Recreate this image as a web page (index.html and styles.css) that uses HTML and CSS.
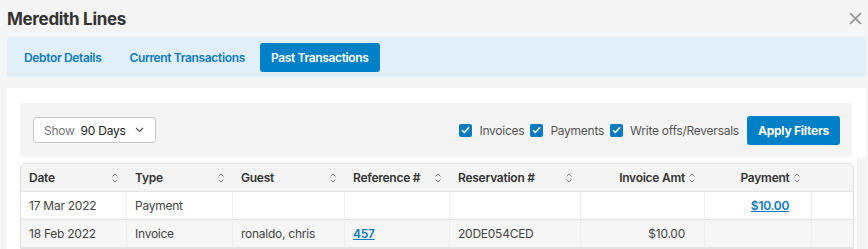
FILE: index.html
```html
<!DOCTYPE html>
<html lang="en">
<head>
    <meta charset="UTF-8">
    <title>Meredith Lines</title>
    <link rel="stylesheet" href="styles.css">
</head>
<body>
    <div class="modal">
        <!-- Header -->
        <div class="modal-header">
            <h1>Meredith Lines</h1>
            <button class="close" aria-label="Close">
                <svg width="13" height="13" viewBox="0 0 13 13"><path d="M1 1L12 12M12 1L1 12" stroke="#8a8a8a" stroke-width="1.6"/></svg>
            </button>
        </div>

        <!-- Tabs -->
        <nav class="tabs">
            <a class="tab">Debtor Details</a>
            <a class="tab">Current Transactions</a>
            <a class="tab active">Past Transactions</a>
        </nav>

        <!-- Panel -->
        <div class="panel">
            <div class="filters">
                <button class="select">
                    <span class="select-label">Show</span>
                    <span class="select-value">90 Days</span>
                    <svg width="9" height="6" viewBox="0 0 9 6"><path d="M1 1L4.5 4.5L8 1" fill="none" stroke="#555" stroke-width="1.2"/></svg>
                </button>
                <div class="checks">
                    <label class="check"><span class="box"><svg width="9" height="8" viewBox="0 0 9 8"><path d="M1 4.2L3.4 6.5L8 1.2" fill="none" stroke="#fff" stroke-width="1.5"/></svg></span>Invoices</label>
                    <label class="check"><span class="box"><svg width="9" height="8" viewBox="0 0 9 8"><path d="M1 4.2L3.4 6.5L8 1.2" fill="none" stroke="#fff" stroke-width="1.5"/></svg></span>Payments</label>
                    <label class="check"><span class="box"><svg width="9" height="8" viewBox="0 0 9 8"><path d="M1 4.2L3.4 6.5L8 1.2" fill="none" stroke="#fff" stroke-width="1.5"/></svg></span>Write offs/Reversals</label>
                    <button class="btn-primary">Apply Filters</button>
                </div>
            </div>

            <table class="grid">
                <colgroup>
                    <col style="width:106px"><col style="width:106px"><col style="width:112px"><col style="width:105px">
                    <col style="width:131px"><col style="width:124px"><col style="width:107px"><col style="width:41px">
                </colgroup>
                <thead>
                    <tr>
                        <th><div class="th">Date<svg class="sort" width="6" height="10" viewBox="0 0 6 10"><path d="M0.5 3.5L3 1L5.5 3.5M0.5 6.5L3 9L5.5 6.5"/></svg></div></th>
                        <th><div class="th">Type<svg class="sort" width="6" height="10" viewBox="0 0 6 10"><path d="M0.5 3.5L3 1L5.5 3.5M0.5 6.5L3 9L5.5 6.5"/></svg></div></th>
                        <th><div class="th">Guest<svg class="sort" width="6" height="10" viewBox="0 0 6 10"><path d="M0.5 3.5L3 1L5.5 3.5M0.5 6.5L3 9L5.5 6.5"/></svg></div></th>
                        <th><div class="th">Reference #<svg class="sort" width="6" height="10" viewBox="0 0 6 10"><path d="M0.5 3.5L3 1L5.5 3.5M0.5 6.5L3 9L5.5 6.5"/></svg></div></th>
                        <th><div class="th">Reservation #<svg class="sort" width="6" height="10" viewBox="0 0 6 10"><path d="M0.5 3.5L3 1L5.5 3.5M0.5 6.5L3 9L5.5 6.5"/></svg></div></th>
                        <th class="th-right">Invoice Amt<svg class="sort inline" width="6" height="10" viewBox="0 0 6 10"><path d="M0.5 3.5L3 1L5.5 3.5M0.5 6.5L3 9L5.5 6.5"/></svg></th>
                        <th class="th-center">Payment<svg class="sort inline" width="6" height="10" viewBox="0 0 6 10"><path d="M0.5 3.5L3 1L5.5 3.5M0.5 6.5L3 9L5.5 6.5"/></svg></th>
                        <th></th>
                    </tr>
                </thead>
                <tbody>
                    <tr>
                        <td>17 Mar 2022</td>
                        <td>Payment</td>
                        <td></td>
                        <td></td>
                        <td></td>
                        <td></td>
                        <td class="pay"><a href="#">$10.00</a></td>
                        <td></td>
                    </tr>
                    <tr>
                        <td>18 Feb 2022</td>
                        <td>Invoice</td>
                        <td>ronaldo, chris</td>
                        <td><a href="#">457</a></td>
                        <td>20DE054CED</td>
                        <td class="amt">$10.00</td>
                        <td></td>
                        <td></td>
                    </tr>
                </tbody>
            </table>
        </div>
    </div>
</body>
</html>
```

FILE: styles.css
```css
/* Page base */
body {
    margin: 0;
    background-color: #f5f5f5;
    font-family: 'Inter', 'Noto Sans', sans-serif;
    font-size: 12px;
    letter-spacing: -0.25px;
    color: #444;
    overflow: hidden;
}

/* Header with title and close */
.modal-header {
    display: flex;
    justify-content: space-between;
    align-items: center;
    height: 37px;
    padding: 0 6px 0 7px;
}

.modal-header h1 {
    margin: 0;
    font-size: 17px;
    font-weight: 700;
    color: #333;
    letter-spacing: -0.3px;
}

.close {
    border: 0;
    background: none;
    padding: 0;
    display: flex;
}

/* Tab strip */
.tabs {
    display: flex;
    align-items: center;
    height: 40px;
    margin: 0 2px 0 7px;
    padding-left: 4px;
    background-color: #e1f0f8;
    border-radius: 3px;
}

.tab {
    padding: 7px 13px;
    margin-right: 2px;
    font-weight: 600;
    letter-spacing: -0.35px;
    color: #0a7abf;
    border-radius: 3px;
    cursor: pointer;
}

.tab.active {
    padding: 7px 11px;
    background-color: #0080c6;
    color: #fff;
}

/* White panel */
.panel {
    position: relative;
    margin: 11px 2px 0 7px;
    padding: 15px 14px 0 13px;
    background-color: #fff;
    height: 150px;
}

/* fake scrollbar track */
.panel::after {
    content: '';
    position: absolute;
    right: 0;
    top: 70px;
    bottom: 0;
    width: 9px;
    background-color: #f3f3f3;
}

/* Filter bar */
.filters {
    display: flex;
    justify-content: space-between;
    align-items: center;
    height: 54px;
    padding: 0 12px 0 13px;
    background-color: #f4f4f4;
}

.select {
    display: flex;
    align-items: center;
    height: 26px;
    padding: 0 11px 0 10px;
    border: 1px solid #c8c8c8;
    border-radius: 3px;
    background-color: #fff;
    font-family: inherit;
    font-size: 12px;
    letter-spacing: inherit;
    white-space: nowrap;
}

.select-label {
    color: #777;
    margin-right: 6px;
}

.select-value {
    color: #222;
    margin-right: 9px;
}

.checks {
    display: flex;
    align-items: center;
}

.check {
    display: flex;
    align-items: center;
    color: #555;
    margin-right: 6px;
}

.box {
    display: flex;
    align-items: center;
    justify-content: center;
    width: 13px;
    height: 13px;
    margin-right: 7px;
    background-color: #0a7abf;
    border-radius: 2px;
}

.btn-primary {
    height: 29px;
    padding: 0 11px;
    margin-left: 2px;
    border: 0;
    border-radius: 3px;
    background-color: #0080c6;
    color: #fff;
    font-family: inherit;
    font-size: 12px;
    letter-spacing: inherit;
    font-weight: 700;
}

/* Table */
.grid {
    margin-top: 6px;
    width: 832px;
    table-layout: fixed;
    border-collapse: separate;
    border-spacing: 0;
    border: 1px solid #e2e2e2;
    border-radius: 4px 4px 0 0;
}

.grid th,
.grid td {
    height: 27px;
    padding: 0 8px;
    text-align: left;
    border-right: 1px solid #efefef;
    border-bottom: 1px solid #e4e4e4;
    white-space: nowrap;
}

.grid th {
    border-right: 0;
    background-color: #f4f4f4;
    font-weight: 600;
    color: #333;
}

.grid td:last-child {
    border-right: 0;
}

.grid tbody tr:nth-child(even) td {
    background-color: #f6f6f6;
}

.th {
    display: flex;
    align-items: center;
    justify-content: space-between;
}

.grid th.th-right {
    text-align: right;
    padding-right: 9px;
}

.grid th.th-center {
    text-align: center;
    padding-left: 32px;
}

/* little up/down sort arrows */
.sort {
    flex-shrink: 0;
    margin-right: 1px;
    fill: none;
    stroke: #808080;
    stroke-width: 1;
}

.sort.inline {
    display: inline-block;
    vertical-align: -1px;
    margin-left: 4px;
}

.grid a {
    color: #0a7abf;
    font-weight: 600;
    text-decoration: underline;
}

.grid td.pay {
    text-align: center;
    padding-left: 32px;
}

.grid td.amt {
    text-align: right;
    padding-right: 19px;
}
```
